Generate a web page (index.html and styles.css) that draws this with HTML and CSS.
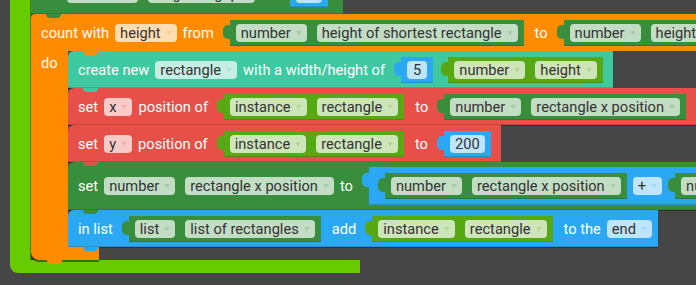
FILE: index.html
```html
<!DOCTYPE html>
<html>
<head>
<meta charset="utf-8">
<link rel="stylesheet" href="styles.css">
</head>
<body>
<div class="ws">
  <div class="lime">
    <div class="lime-head"></div>
    <div class="lime-mid">
      <div class="lime-arm"></div>
      <div class="stack">
        <div class="st dg first">
          <span class="lbl">set</span>
          <span class="fld dd">number</span>
          <span class="fld dd">height of gap</span>
          <span class="lbl">to</span>
          <span class="val bl"><span class="fld">10</span></span>
        </div>
        <div class="c or">
          <div class="st head">
            <span class="lbl">count with</span>
            <span class="fld dd">height</span>
            <span class="lbl">from</span>
            <span class="val dg"><span class="fld dd">number</span><span class="fld dd">height of shortest rectangle</span></span>
            <span class="lbl">to</span>
            <span class="val dg"><span class="fld dd">number</span><span class="fld dd">height of tallest rectangle</span></span>
          </div>
          <div class="c-mid">
            <div class="c-arm"><span class="lbl do">do</span></div>
            <div class="stack">
              <div class="st tl">
                <span class="lbl">create new</span>
                <span class="fld dd">rectangle</span>
                <span class="lbl">with a width/height of</span>
                <span class="val bl"><span class="fld num">5</span></span>
                <span class="val gr"><span class="fld dd">number</span><span class="fld dd">height</span></span>
              </div>
              <div class="st rd">
                <span class="lbl">set</span>
                <span class="fld dd">x</span>
                <span class="lbl">position of</span>
                <span class="val gr"><span class="fld dd">instance</span><span class="fld dd">rectangle</span></span>
                <span class="lbl">to</span>
                <span class="val dg"><span class="fld dd">number</span><span class="fld dd">rectangle x position</span></span>
              </div>
              <div class="st rd">
                <span class="lbl">set</span>
                <span class="fld dd">y</span>
                <span class="lbl">position of</span>
                <span class="val gr"><span class="fld dd">instance</span><span class="fld dd">rectangle</span></span>
                <span class="lbl">to</span>
                <span class="val bl"><span class="fld">200</span></span>
              </div>
              <div class="st dg tall">
                <span class="lbl">set</span>
                <span class="fld dd">number</span>
                <span class="fld dd">rectangle x position</span>
                <span class="lbl">to</span>
                <span class="val bl outer">
                  <span class="val dg"><span class="fld dd">number</span><span class="fld dd">rectangle x position</span></span>
                  <span class="fld dd">+</span>
                  <span class="val dg"><span class="fld dd">number</span><span class="fld dd">rectangle width</span></span>
                </span>
              </div>
              <div class="st bl">
                <span class="lbl">in list</span>
                <span class="val dg"><span class="fld dd">list</span><span class="fld dd">list of rectangles</span></span>
                <span class="lbl add">add</span>
                <span class="val gr"><span class="fld dd">instance</span><span class="fld dd">rectangle</span></span>
                <span class="lbl">to the</span>
                <span class="fld dd">end</span>
              </div>
            </div>
          </div>
          <div class="c-foot"></div>
        </div>
      </div>
    </div>
    <div class="lime-foot"></div>
  </div>
</div>
</body>
</html>
```

FILE: styles.css
```css
* { box-sizing: border-box; }
html, body { margin: 0; padding: 0; }
body {
  background: #464646;
  font-family: Roboto, "Noto Sans", sans-serif;
  font-size: 11pt;
}
.ws {
  position: relative;
  width: 696px;
  height: 285px;
  overflow: hidden;
  background: #464646;
}

/* colours */
.lime { --c: #66cc00; }
.dg { --c: #388e3c; }
.or { --c: #ff8c00; }
.tl { --c: #3fc9a0; }
.rd { --c: #e75048; }
.gr { --c: #57a914; }
.bl { --c: #2ba8f4; }

/* outer lime C block (placed on the workspace canvas) */
.lime {
  position: absolute;
  left: 10px;
  top: -53px;
  width: max-content;
  display: flex;
  flex-direction: column;
  align-items: flex-start;
}
.lime-head {
  width: 420px;
  height: 30px;
  background: var(--c);
  border-top-left-radius: 8px;
}
.lime-mid { display: flex; }
.lime-arm {
  width: 21px;
  background: var(--c);
  box-shadow: inset -1px 0 0 rgba(0,0,0,.35);
}
.lime-foot {
  width: 350px;
  height: 13px;
  background: var(--c);
  border-bottom-left-radius: 8px;
}

.stack {
  display: flex;
  flex-direction: column;
  align-items: flex-start;
}

/* statement blocks */
.st {
  position: relative;
  display: flex;
  align-items: center;
  flex-shrink: 0;
  height: 37px;
  padding: 0 6px 0 10px;
  background: var(--c);
  border-top-left-radius: 6px;
  white-space: nowrap;
  box-shadow: inset 0 -1px 0 rgba(0,0,0,.14), 0 1px 0 rgba(0,0,0,.3);
}
.st.first { padding-bottom: 4px; padding-right: 11px; }
.st.tall { height: 48px; }
.st::after {
  content: "";
  position: absolute;
  left: 15px;
  bottom: -4px;
  width: 15px;
  height: 4px;
  background: var(--c);
  border-radius: 0 0 6px 6px;
  z-index: 1;
}
.st.head { border-top-left-radius: 4px; box-shadow: none; }
.st.head::after { left: 52px; }

/* C block */
.c {
  position: relative;
  display: flex;
  flex-direction: column;
  align-items: flex-start;
}
.c-mid { display: flex; }
.c-arm {
  width: 37px;
  background: var(--c);
  padding-left: 10px;
}
.c-foot {
  position: relative;
  width: 68px;
  height: 13px;
  background: var(--c);
  border-bottom-left-radius: 8px;
  box-shadow: 0 2px 0 rgba(0,0,0,.45);
}
.c-foot::after {
  content: "";
  position: absolute;
  left: 16px;
  bottom: -4px;
  width: 15px;
  height: 4px;
  background: var(--c);
  border-radius: 0 0 6px 6px;
  z-index: 1;
}

/* labels and fields */
.lbl { color: #fff; line-height: 18px; }
.do { display: block; line-height: 24px; }

.fld {
  display: inline-flex;
  align-items: center;
  height: 18px;
  padding: 0 5px;
  border-radius: 4px;
  background: rgba(255,255,255,.7);
  color: #333;
  line-height: 18px;
  white-space: nowrap;
}
.fld.num { padding: 0 6px; }
.dd::after {
  content: "";
  margin-left: 5px;
  width: 0;
  height: 0;
  border-left: 3.5px solid transparent;
  border-right: 3.5px solid transparent;
  border-top: 4px solid color-mix(in srgb, var(--c) 45%, white);
}

/* value (reporter) blocks */
.val {
  position: relative;
  display: inline-flex;
  align-items: center;
  flex-shrink: 0;
  height: 26px;
  padding: 0 6px;
  background: var(--c);
  margin-right: 4px;
  box-shadow: inset 0 -1px 0 rgba(0,0,0,.15);
}
.val.outer { height: 38px; }
.val::before {
  content: "";
  position: absolute;
  left: -7px;
  top: 5px;
  width: 8px;
  height: 14px;
  background: var(--c);
  border-radius: 5px 0 0 5px;
}
.val.outer::before { top: 6px; }

/* spacing */
.st > * + * { margin-left: 6px; }
.val > * + * { margin-left: 6px; }
.fld + .fld { margin-left: 10px; }
.st > * + .val { margin-left: 16px; }
.st > .val + .lbl { margin-left: 7px; }
.val + .val { margin-left: 11px; }
.val > .val:first-child { margin-left: 10px; }
.val > .val { margin-right: 0; }
.val > .fld + .val { margin-left: 13px; }
```
